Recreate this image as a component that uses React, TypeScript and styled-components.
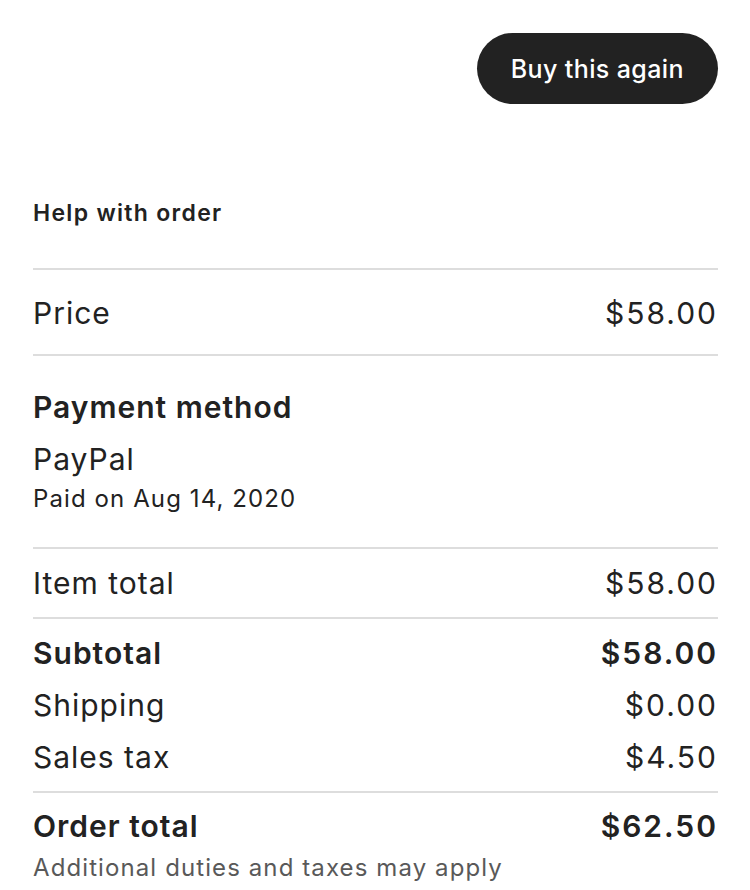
import React from "react";
import styled, { createGlobalStyle } from "styled-components";

const Global = createGlobalStyle`
  html, body { margin: 0; padding: 0; background: #ffffff; }
  body { font-family: Inter, "Noto Sans", "Liberation Sans", sans-serif; color: #222222; }
`;

const Page = styled.div`
  width: 750px;
  box-sizing: border-box;
  padding: 33px 32px 0 33px;
  display: flex;
  flex-direction: column;
`;

const TopBar = styled.div`
  display: flex;
  justify-content: flex-end;
`;

const PillButton = styled.button`
  height: 71px;
  padding: 0 34px;
  border: none;
  border-radius: 36px;
  background: #222222;
  color: #ffffff;
  font-family: inherit;
  font-size: 25px;
  letter-spacing: 0.4px;
  font-weight: 500;
  cursor: pointer;
`;

const HelpLink = styled.div`
  margin-top: 94px;
  margin-bottom: 40px;
  font-size: 23px;
  line-height: 30px;
  letter-spacing: 1.3px;
  font-weight: 600;
`;

const Divider = styled.hr`
  margin: 0;
  border: none;
  height: 2px;
  background: #dddddd;
`;

const Section = styled.div<{ $top: number; $bottom: number; $gap?: number }>`
  display: flex;
  flex-direction: column;
  gap: ${(p) => p.$gap ?? 0}px;
  padding: ${(p) => p.$top}px 0 ${(p) => p.$bottom}px;
`;

const Row = styled.div<{ $bold?: boolean }>`
  display: flex;
  justify-content: space-between;
  align-items: center;
  font-size: 30px;
  line-height: 36px;
  letter-spacing: 1px;
  font-weight: ${(p) => (p.$bold ? 600 : 400)};
`;

const Amount = styled.span`
  letter-spacing: 2px;
`;

const Heading = styled.div`
  font-size: 30px;
  line-height: 36px;
  letter-spacing: 1px;
  font-weight: 600;
`;

const BodyText = styled.div<{ $mt?: number }>`
  font-size: 30px;
  line-height: 36px;
  letter-spacing: 1px;
  margin-top: ${(p) => p.$mt ?? 0}px;
`;

const SmallText = styled.div<{ $mt?: number; $muted?: boolean }>`
  font-size: 24px;
  line-height: 30px;
  letter-spacing: 1.1px;
  margin-top: ${(p) => p.$mt ?? 0}px;
  color: ${(p) => (p.$muted ? "#595959" : "#222222")};
`;

export default function App() {
  return (
    <>
      <Global />
      <Page>
        <TopBar>
          <PillButton>Buy this again</PillButton>
        </TopBar>
        <HelpLink>Help with order</HelpLink>
        <Divider />
        <Section $top={25} $bottom={23}>
          <Row>
            <span>Price</span>
            <Amount>$58.00</Amount>
          </Row>
        </Section>
        <Divider />
        <Section $top={33} $bottom={33}>
          <Heading>Payment method</Heading>
          <BodyText $mt={16}>PayPal</BodyText>
          <SmallText $mt={7}>Paid on Aug 14, 2020</SmallText>
        </Section>
        <Divider />
        <Section $top={16} $bottom={16}>
          <Row>
            <span>Item total</span>
            <Amount>$58.00</Amount>
          </Row>
        </Section>
        <Divider />
        <Section $top={16} $bottom={16} $gap={16}>
          <Row $bold>
            <span>Subtotal</span>
            <Amount>$58.00</Amount>
          </Row>
          <Row>
            <span>Shipping</span>
            <Amount>$0.00</Amount>
          </Row>
          <Row>
            <span>Sales tax</span>
            <Amount>$4.50</Amount>
          </Row>
        </Section>
        <Divider />
        <Section $top={15} $bottom={0}>
          <Row $bold>
            <span>Order total</span>
            <Amount>$62.50</Amount>
          </Row>
          <SmallText $mt={9} $muted>
            Additional duties and taxes may apply
          </SmallText>
        </Section>
      </Page>
    </>
  );
}
